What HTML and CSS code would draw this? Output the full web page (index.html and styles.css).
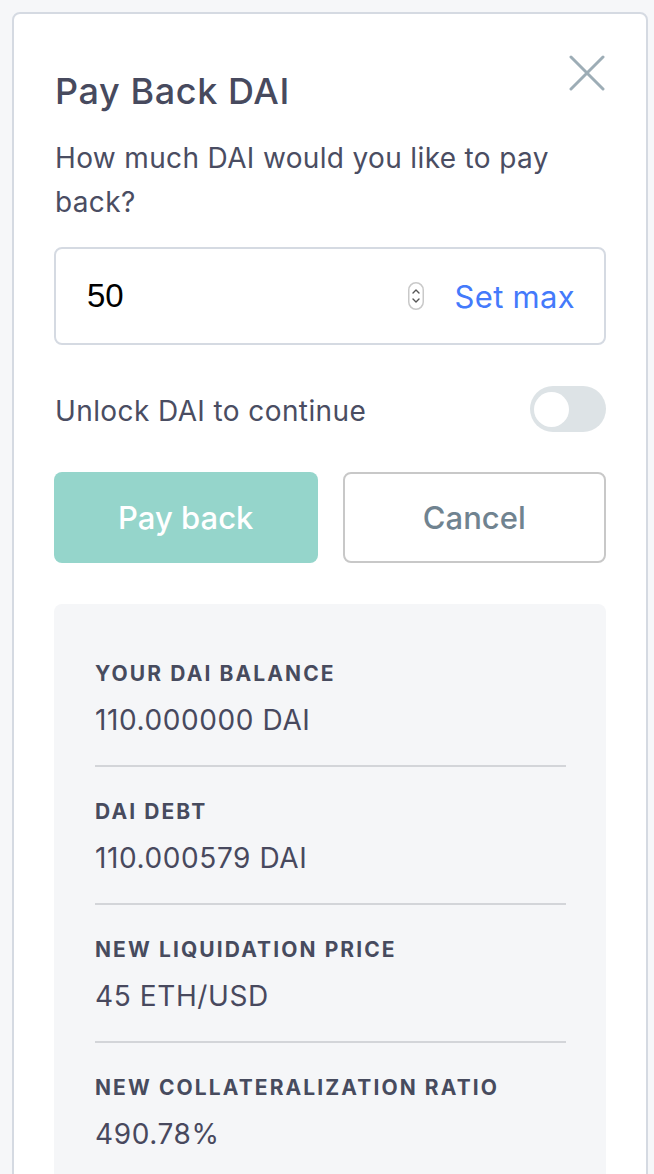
FILE: index.html
```html
<!DOCTYPE html>
<html lang="en">
<head>
<meta charset="utf-8">
<title>Pay Back DAI</title>
<link rel="stylesheet" href="styles.css">
</head>
<body>
<div class="card">
  <div class="header">
    <h1 class="title">Pay Back DAI</h1>
    <button class="close" aria-label="Close">
      <svg width="36" height="36" viewBox="0 0 36 36"><path d="M2 2 L34 34 M34 2 L2 34" stroke="#9dadb6" stroke-width="3" stroke-linecap="round" fill="none"/></svg>
    </button>
  </div>
  <p class="question">How much DAI would you like to pay back?</p>
  <div class="input-box">
    <span class="amount">50</span>
    <svg class="spinner" width="16" height="28" viewBox="0 0 16 28"><rect x="0.75" y="0.75" width="14.5" height="26.5" rx="7.25" fill="#fff" stroke="#c9c9c9" stroke-width="1.5"/><path d="M5 11 L8 8 L11 11 M5 17 L8 20 L11 17" stroke="#555" stroke-width="1.4" fill="none" stroke-linecap="round" stroke-linejoin="round"/></svg>
    <span class="setmax">Set max</span>
  </div>
  <div class="unlock-row">
    <span class="unlock-text">Unlock DAI to continue</span>
    <span class="toggle"><span class="knob"></span></span>
  </div>
  <div class="buttons">
    <button class="btn btn-primary">Pay back</button>
    <button class="btn btn-secondary">Cancel</button>
  </div>
  <div class="panel">
    <div class="item">
      <div class="label">Your DAI balance</div>
      <div class="value">110.000000 DAI</div>
    </div>
    <div class="item">
      <div class="label">DAI debt</div>
      <div class="value">110.000579 DAI</div>
    </div>
    <div class="item">
      <div class="label">New liquidation price</div>
      <div class="value">45 ETH/USD</div>
    </div>
    <div class="item last">
      <div class="label">New collateralization ratio</div>
      <div class="value">490.78%</div>
    </div>
  </div>
</div>
</body>
</html>
```
FILE: styles.css
```css
* { box-sizing: border-box; }
html, body { margin: 0; padding: 0; }
body {
  background: #f6f7f9;
  font-family: Inter, "Noto Sans", sans-serif;
  color: #48495e;
  padding: 12px 6px 0 12px;
  height: 1174px;
  overflow: hidden;
}
.card {
  background: #fff;
  border: 2px solid #d5dae2;
  border-radius: 8px;
  padding: 41px 40px 0 40px;
  min-height: 1300px;
}
.header {
  display: flex;
  justify-content: space-between;
  align-items: flex-start;
}
.title {
  margin: 16px 0 0 1px;
  font-size: 36px;
  font-weight: 500;
  letter-spacing: 0.6px;
  line-height: 40px;
  color: #474a5e;
}
.close {
  border: 0;
  background: none;
  padding: 0;
  width: 36px;
  height: 36px;
  margin-right: 1px;
}
.close svg { display: block; }
.question {
  margin: 25px 0 0 1px;
  font-size: 28px;
  letter-spacing: 0.35px;
  line-height: 44px;
  color: #4a4d62;
}
.input-box {
  margin-top: 23px;
  height: 98px;
  border: 2px solid #d5dae2;
  border-radius: 8px;
  display: flex;
  align-items: center;
  padding: 0 29px 0 31px;
}
.amount {
  flex: 1;
  font-family: "Liberation Sans", Arial, sans-serif;
  font-size: 33px;
  color: #000;
}
.spinner { display: block; margin-right: 31px; }
.setmax {
  font-size: 31px;
  letter-spacing: 0.3px;
  color: #447afb;
}
.unlock-row {
  margin-top: 41px;
  display: flex;
  justify-content: space-between;
  align-items: center;
}
.unlock-text {
  font-size: 28px;
  letter-spacing: 0.4px;
  color: #4a4d62;
  padding: 3px 0 0 1px;
}
.toggle {
  width: 76px;
  height: 46px;
  border-radius: 23px;
  background: #dde3e6;
  display: flex;
  align-items: center;
  padding-left: 4px;
}
.knob {
  width: 35px;
  height: 35px;
  border-radius: 50%;
  background: #fff;
}
.buttons {
  margin-top: 40px;
  display: grid;
  grid-template-columns: 1fr 1fr;
  gap: 25px;
}
.btn {
  height: 91px;
  border-radius: 8px;
  font-family: Inter, "Noto Sans", sans-serif;
  font-size: 31px;
  font-weight: 500;
}
.btn-primary {
  background: #95d5cb;
  color: #fff;
  border: 0;
}
.btn-secondary {
  background: #fff;
  border: 2px solid #c8c8c8;
  color: #708390;
}
.panel {
  margin-top: 41px;
  background: #f5f6f8;
  border-radius: 8px;
  padding: 25px 40px 200px 41px;
}
.item {
  padding: 31px 0 26px;
  border-bottom: 2px solid #d3d5d9;
}
.item.last { border-bottom: 0; }
.label {
  font-size: 21px;
  line-height: 28px;
  font-weight: 700;
  text-transform: uppercase;
  letter-spacing: 2.1px;
  color: #474b5e;
}
.value {
  margin-top: 13px;
  font-size: 28px;
  letter-spacing: 0.6px;
  line-height: 38px;
  color: #48495e;
}
```
